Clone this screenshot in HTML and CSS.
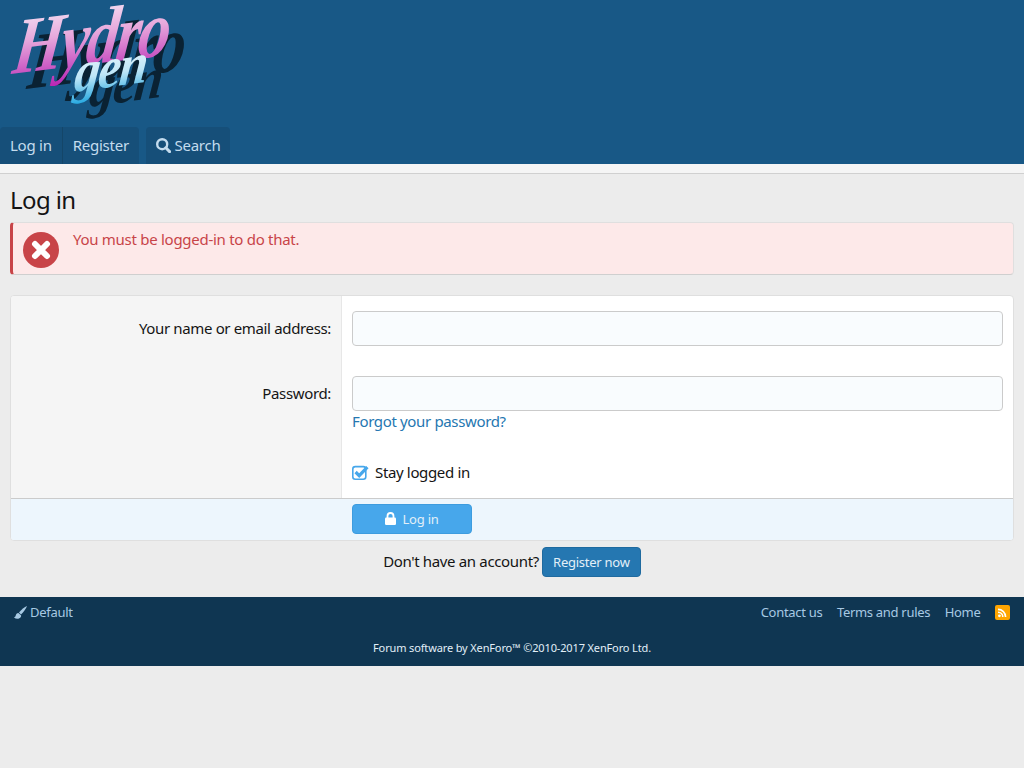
FILE: index.html
```html
<!DOCTYPE html>
<html lang="en">
<head>
  <meta charset="UTF-8">
  <meta name="viewport" content="width=device-width, initial-scale=1.0">
  <title>Log in | Hydrogen</title>
  <link rel="stylesheet" href="styles.css">
</head>
<body>
  <header class="site-header">
    <div class="logo-row">
      <svg class="logo" width="180" height="122" viewBox="0 0 180 122">
        <defs>
          <linearGradient id="hydroFill" x1="0" y1="0" x2="0" y2="1">
            <stop offset="0" stop-color="#f6f2fa"/>
            <stop offset="0.45" stop-color="#e7a8dc"/>
            <stop offset="1" stop-color="#b826b4"/>
          </linearGradient>
          <linearGradient id="genFill" x1="0" y1="0" x2="0" y2="1">
            <stop offset="0" stop-color="#ffffff"/>
            <stop offset="0.6" stop-color="#bfe6f7"/>
            <stop offset="1" stop-color="#27a9e1"/>
          </linearGradient>
        </defs>
        <g class="logo-text">
          <text class="logo-hydro" transform="translate(6 74) rotate(-7) skewX(-14) scale(0.9 1.1)" fill="url(#hydroFill)">Hydro</text>
          <text class="logo-gen" transform="translate(68 92) rotate(-8) skewX(-14) scale(1 1.1)" fill="url(#genFill)">gen</text>
        </g>
      </svg>
    </div>
    <nav class="site-nav">
      <div class="nav-group">
        <a class="nav-tab" href="#">Log in</a>
        <a class="nav-tab" href="#">Register</a>
      </div>
      <div class="nav-group">
        <a class="nav-tab" href="#">
          <svg class="icon-search" width="15" height="15" viewBox="0 0 15 15"><circle cx="6.2" cy="6.2" r="5" fill="none" stroke="currentColor" stroke-width="2.4"/><path d="M9.8 9.8L13.6 13.6" stroke="currentColor" stroke-width="3" stroke-linecap="round"/></svg>
          Search
        </a>
      </div>
    </nav>
  </header>
  <div class="sub-nav"></div>

  <main class="page">
    <h1 class="page-title">Log in</h1>

    <div class="block-error">
      <svg class="error-icon" width="36" height="36" viewBox="0 0 36 36"><circle cx="18" cy="18" r="18" fill="#c84448"/><path d="M12 12L24 24M24 12L12 24" stroke="#fff" stroke-width="6" stroke-linecap="round"/></svg>
      <div class="error-text">You must be logged-in to do that.</div>
    </div>

    <form class="login-form">
      <div class="form-row">
        <label class="row-label" for="login">Your name or email address:</label>
        <div class="row-field"><input class="input" type="text" id="login"></div>
      </div>
      <div class="form-row">
        <label class="row-label" for="password">Password:</label>
        <div class="row-field">
          <input class="input" type="password" id="password">
          <a class="forgot" href="#">Forgot your password?</a>
        </div>
      </div>
      <div class="form-row">
        <div class="row-label"></div>
        <div class="row-field">
          <div class="check-line">
            <svg class="check-icon" width="17" height="15" viewBox="0 0 17 15"><rect x="0.8" y="1.6" width="13" height="12.6" rx="2.5" fill="none" stroke="#47a7eb" stroke-width="1.6"/><path d="M3.6 7L7.2 10.6L15.4 2.2" fill="none" stroke="#47a7eb" stroke-width="3.2"/></svg>
            <span>Stay logged in</span>
          </div>
        </div>
      </div>
      <div class="form-submit">
        <button class="btn-login" type="submit">
          <svg width="11" height="13" viewBox="0 0 11 13"><path d="M2.5 6V4a3 3 0 0 1 6 0v2" fill="none" stroke="#fff" stroke-width="1.8"/><rect x="0" y="5.5" width="11" height="7.5" rx="1.2" fill="#fff"/></svg>
          Log in
        </button>
      </div>
    </form>

    <div class="register-line">
      Don't have an account?
      <a class="btn-register" href="#">Register now</a>
    </div>
  </main>

  <footer class="site-footer">
    <div class="footer-links">
      <a class="style-link" href="#">
        <svg width="13" height="13" viewBox="0 0 13 13"><path d="M13 0C10.6 1 7.2 3.8 5 6.4L7 8.4C9.6 6 12.2 2.6 13 0Z" fill="currentColor"/><path d="M4.4 7C2.8 7.2 2 8.2 1.7 9.6C1.5 10.6 0.9 11.1 0 11.6C2.2 13.4 5.6 13.2 6.9 10.8C7.3 10 7.2 9.2 6.7 8.9Z" fill="currentColor"/></svg>
        Default
      </a>
      <ul class="footer-nav">
        <li><a href="#">Contact us</a></li>
        <li><a href="#">Terms and rules</a></li>
        <li><a href="#">Home</a></li>
        <li>
          <a class="rss" href="#"><svg width="15" height="15" viewBox="0 0 15 15"><rect width="15" height="15" rx="2" fill="#ffa500"/><circle cx="4.4" cy="10.8" r="1.4" fill="#fff"/><path d="M3 7.2a4.8 4.8 0 0 1 4.8 4.8M3 4.4a7.6 7.6 0 0 1 7.6 7.6" fill="none" stroke="#fff" stroke-width="1.6"/></svg></a>
        </li>
      </ul>
    </div>
    <div class="copyright">Forum software by XenForo™ ©2010-2017 XenForo Ltd.</div>
  </footer>
</body>
</html>
```

FILE: styles.css
```css
* {
  box-sizing: border-box;
}
body {
  margin: 0;
  background-color: #ececec;
  color: #141414;
  font-family: "Noto Sans", sans-serif;
  font-size: 15px;
  line-height: 21px;
  letter-spacing: -0.35px;
}
a {
  text-decoration: none;
}
.site-header {
  background-color: #185886;
}
.logo-row {
  height: 127px;
}
.logo {
  display: block;
  margin-left: 5px;
}
.logo-text {
  filter: drop-shadow(15px 15px 0 #0a2233);
  font-family: "Liberation Serif", serif;
  font-style: italic;
  font-weight: bold;
}
.logo-hydro {
  font-size: 72px;
  letter-spacing: -3px;
}
.logo-gen {
  font-size: 52px;
  letter-spacing: -2px;
}
.site-nav {
  display: flex;
  gap: 7px;
  height: 37px;
  letter-spacing: -0.25px;
}
.nav-group {
  display: flex;
  background-color: #164f79;
  border-radius: 4px 4px 0 0;
}
.nav-tab {
  display: block;
  padding: 8px 10px;
  color: #c4dcee;
}
.nav-tab + .nav-tab {
  border-left: 1px solid #144669;
}
.icon-search {
  vertical-align: -2px;
}
.sub-nav {
  height: 10px;
  background-color: #f5f5f5;
  border-bottom: 1px solid #d0d0d0;
}
.page {
  padding: 0 10px 20px;
}
.page-title {
  margin: 0;
  padding-top: 11px;
  height: 48px;
  font-size: 24px;
  line-height: 30px;
  font-weight: normal;
  letter-spacing: -0.6px;
}
.block-error {
  display: flex;
  height: 53px;
  margin-bottom: 20px;
  background-color: #fde9e9;
  color: #c84448;
  border: 1px solid #dfdfdf;
  border-bottom-color: #cfcfcf;
  border-left: 3px solid #c84448;
  border-radius: 4px;
}
.error-icon {
  margin: 9px 14px 0 10px;
}
.error-text {
  padding-top: 6px;
  letter-spacing: -0.28px;
}
.login-form {
  background-color: #fff;
  border: 1px solid #dfdfdf;
  border-radius: 4px;
  overflow: hidden;
}
.form-row {
  display: flex;
}
.row-label {
  flex: 0 0 331px;
  padding: 22px 10px 0;
  text-align: right;
  background-color: #f5f5f5;
  border-right: 1px solid #e7e7e7;
}
.row-field {
  flex: 1;
  padding: 15px 10px;
}
.input {
  display: block;
  width: 100%;
  height: 35px;
  background-color: #f9fcfe;
  border: 1px solid #cbcbcb;
  border-radius: 4px;
}
.forgot {
  color: #2577b1;
}
.check-line {
  display: flex;
  align-items: center;
  gap: 6px;
}
.form-submit {
  height: 42px;
  padding: 5px 0 0 341px;
  background-color: #edf6fd;
  border-top: 1px solid #cbcbcb;
}
.btn-login {
  display: block;
  width: 120px;
  height: 30px;
  padding: 0;
  background-color: #47a7eb;
  border: 1px solid #3d9cdf;
  border-radius: 4px;
  color: #e2eff8;
  font-family: inherit;
  font-size: 13px;
  letter-spacing: -0.2px;
}
.btn-login svg {
  margin-right: 3px;
  vertical-align: -1px;
}
.register-line {
  display: flex;
  justify-content: center;
  gap: 3px;
  margin-top: 6px;
  line-height: 28px;
}
.btn-register {
  display: block;
  width: 99px;
  height: 30px;
  background-color: #2577b1;
  border: 1px solid #1f6a9f;
  border-radius: 4px;
  color: #e2eff8;
  font-size: 13px;
  line-height: 28px;
  text-align: center;
  letter-spacing: -0.25px;
}
.site-footer {
  height: 69px;
  padding: 5px 14px 0;
  background-color: #0f3652;
  font-size: 13px;
  letter-spacing: -0.3px;
}
.site-footer a {
  color: #a7c9e3;
}
.footer-links {
  display: flex;
  justify-content: space-between;
}
.style-link svg {
  vertical-align: -2px;
}
.footer-nav {
  display: flex;
  align-items: center;
  gap: 14.5px;
  margin: 0;
  padding: 0;
  list-style: none;
}
.rss {
  display: block;
  height: 15px;
}
.rss svg {
  display: block;
}
.copyright {
  margin-top: 14px;
  color: #e2eff8;
  font-size: 11px;
  line-height: 21px;
  text-align: center;
  letter-spacing: -0.14px;
}
```
